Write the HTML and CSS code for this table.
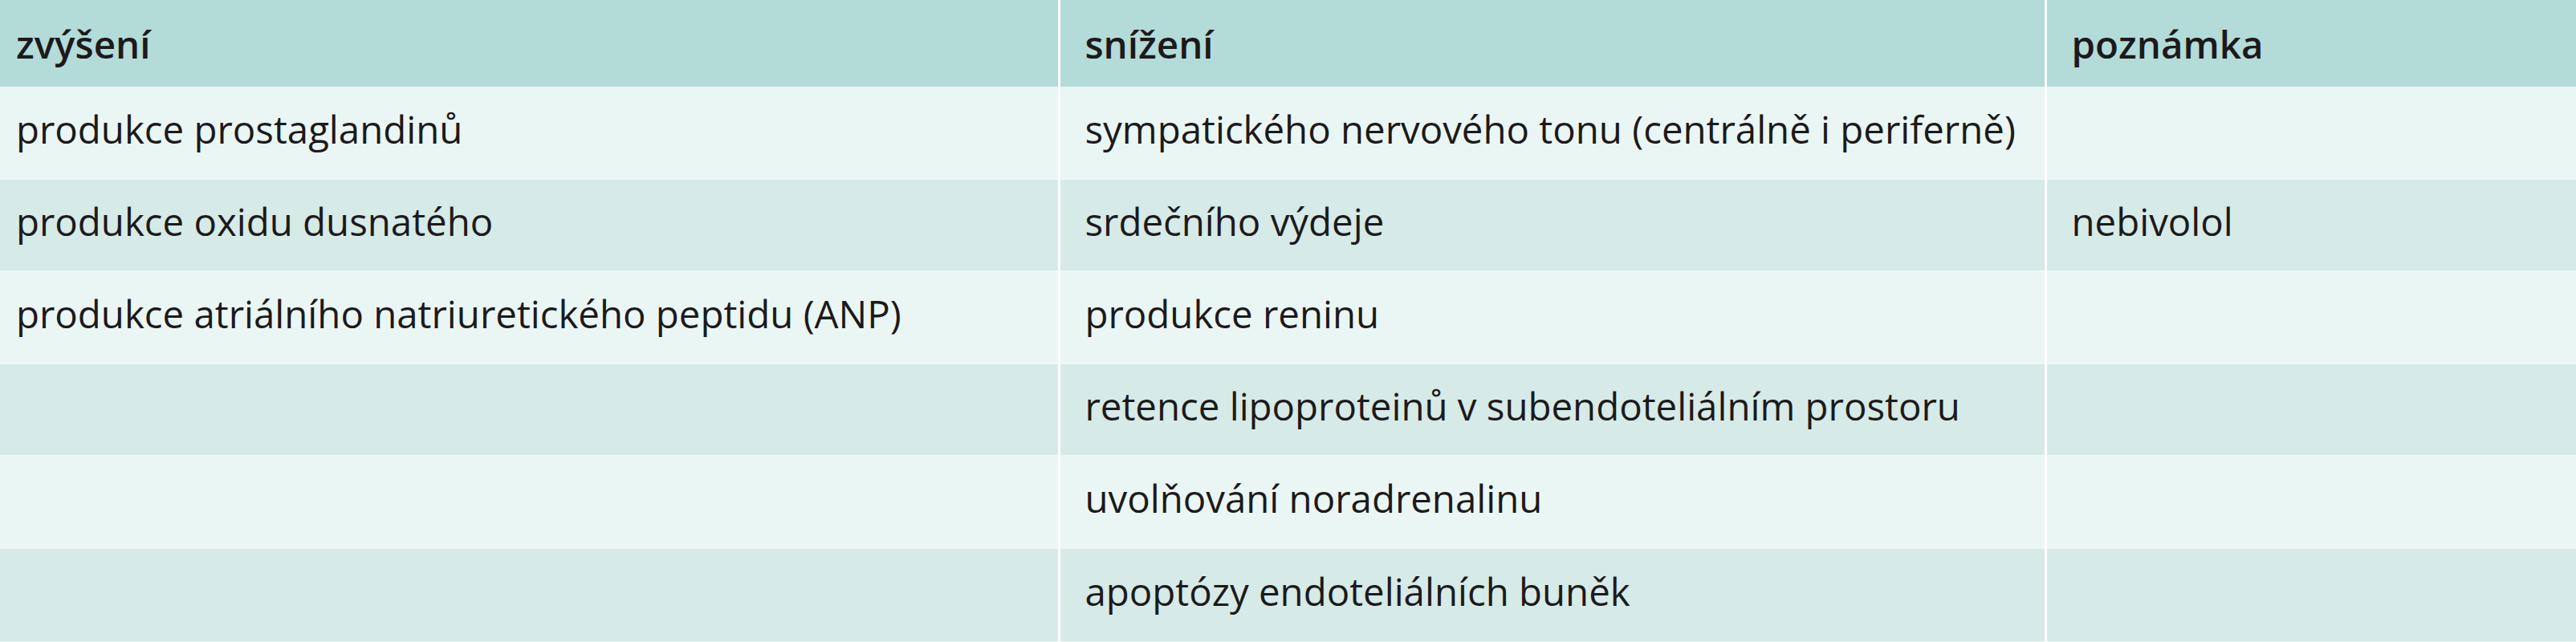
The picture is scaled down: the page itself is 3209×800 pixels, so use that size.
FILE: index.html
```html
<!DOCTYPE html>
<html lang="cs">
<head>
<meta charset="utf-8">
<link rel="stylesheet" href="styles.css">
</head>
<body>
<table class="tbl">
  <colgroup>
    <col class="c1">
    <col class="c2">
    <col class="c3">
  </colgroup>
  <thead>
    <tr><th>zvýšení</th><th>snížení</th><th>poznámka</th></tr>
  </thead>
  <tbody>
    <tr class="odd"><td>produkce prostaglandinů</td><td>sympatického nervového tonu (centrálně i periferně)</td><td></td></tr>
    <tr class="even"><td>produkce oxidu dusnatého</td><td>srdečního výdeje</td><td>nebivolol</td></tr>
    <tr class="odd"><td>produkce atriálního natriuretického peptidu (ANP)</td><td>produkce reninu</td><td></td></tr>
    <tr class="even"><td></td><td>retence lipoproteinů v subendoteliálním prostoru</td><td></td></tr>
    <tr class="odd"><td></td><td>uvolňování noradrenalinu</td><td></td></tr>
    <tr class="even last"><td></td><td>apoptózy endoteliálních buněk</td><td></td></tr>
  </tbody>
</table>
</body>
</html>
```
FILE: styles.css
```css
html, body {
  margin: 0;
  padding: 0;
  background: #ffffff;
}
.tbl {
  width: 3209px;
  border-collapse: collapse;
  table-layout: fixed;
  font-family: "Open Sans", "Noto Sans", sans-serif;
  font-size: 47.4px;
  color: #1c1a1b;
}
.c1 { width: 1319px; }
.c2 { width: 1229px; }
.c3 { width: auto; }
.tbl th,
.tbl td {
  text-align: left;
  vertical-align: middle;
  padding: 0 0 0 31px;
  white-space: nowrap;
  overflow: hidden;
}
.tbl th:first-child,
.tbl td:first-child {
  padding-left: 20px;
}
.tbl th + th,
.tbl td + td {
  border-left: 3px solid #ffffff;
}
.tbl thead tr {
  height: 108px;
  background: #b3dbd8;
}
.tbl th {
  font-weight: 600;
  font-size: 47.5px;
}
.tbl tbody tr {
  height: 115px;
}
.tbl tbody td {
  padding-bottom: 10px;
  border-bottom: 2px solid #eef8f6;
}
.tbl tr.odd { background: #eaf6f4; }
.tbl tr.even { background: #d6eae7; }
.tbl tr.last { height: 117px; }
```
